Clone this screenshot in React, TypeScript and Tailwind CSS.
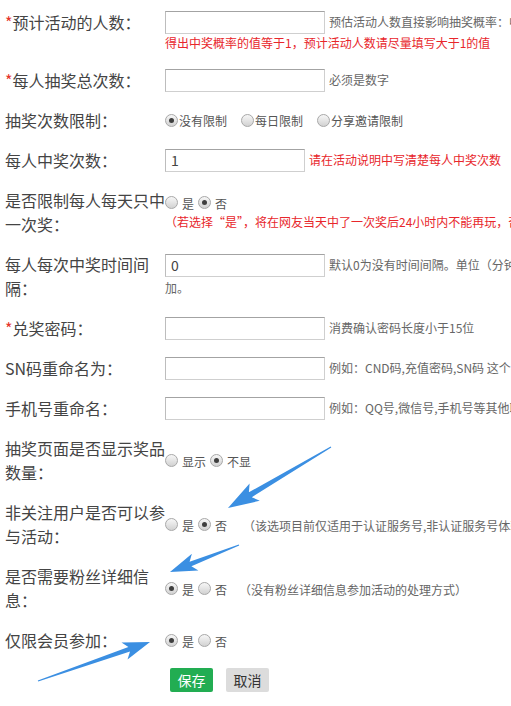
import type { ReactNode } from 'react';
import clsx from 'clsx';

function Row({ label, required, children, align = 'items-center' }: { label: string; required?: boolean; children: ReactNode; align?: string }) {
  return (
    <div className={clsx('flex', align)}>
      <div className="ml-[5px] w-[160px] shrink-0 text-[16px] leading-6 text-[#444]">
        {required && <span className="text-[#e5332a]">*</span>}
        {label}
      </div>
      <div className="min-w-0 flex-1">{children}</div>
    </div>
  );
}

function Radio({ checked }: { checked?: boolean }) {
  return (
    <span className="flex h-[13px] w-[13px] shrink-0 items-center justify-center rounded-full border border-[#a8a8a8] bg-linear-to-b from-[#f7f7f7] to-[#d2d2d2]">
      {checked && <span className="h-[5px] w-[5px] rounded-full bg-[#3f3f3f]" />}
    </span>
  );
}

function Input({ value, wide = true }: { value?: string; wide?: boolean }) {
  return (
    <input
      type="text"
      defaultValue={value}
      className={clsx(
        'h-[23px] shrink-0 border border-[#cfcfcf] border-t-[#a3a3a3] border-l-[#bdbdbd] bg-white px-[5px] text-[14px] text-[#444] outline-none',
        wide ? 'w-[160px]' : 'w-[140px]'
      )}
    />
  );
}

function Help({ children, red }: { children: ReactNode; red?: boolean }) {
  return (
    <span className={clsx('ml-[4px] whitespace-nowrap text-[12px]', red ? 'text-[#e8262b]' : 'text-[#666]')}>{children}</span>
  );
}

// 是 / 否 style radio pairs
function YesNo({ a, b, sel }: { a: string; b: string; sel: 0 | 1 }) {
  return (
    <div className="flex items-center gap-[4px] text-[12px] text-[#555]">
      <Radio checked={sel === 0} />
      <span className="translate-y-[2px]">{a}</span>
      <Radio checked={sel === 1} />
      <span className="translate-y-[2px]">{b}</span>
    </div>
  );
}

function arrowPoints(x1: number, y1: number, x2: number, y2: number, head = 24, hw = 9, sw = 2.6) {
  const dx = x2 - x1;
  const dy = y2 - y1;
  const len = Math.hypot(dx, dy);
  const ux = dx / len;
  const uy = dy / len;
  const nx = -uy;
  const ny = ux;
  const bx = x2 - ux * head;
  const by = y2 - uy * head;
  const pts = [
    [x1 + nx * 0.6, y1 + ny * 0.6],
    [bx + nx * sw, by + ny * sw],
    [bx - ux * 5 + nx * hw, by - uy * 5 + ny * hw],
    [x2, y2],
    [bx - ux * 5 - nx * hw, by - uy * 5 - ny * hw],
    [bx - nx * sw, by - ny * sw],
    [x1 - nx * 0.6, y1 - ny * 0.6],
  ];
  return pts.map((p) => p.map((v) => v.toFixed(1)).join(',')).join(' ');
}

export default function App() {
  return (
    <div className="relative min-h-screen w-full overflow-hidden bg-white font-['Noto_Sans_CJK_SC',sans-serif]">
      <div className="flex flex-col gap-4 pt-[10px] pb-4">
        {/* 预计活动的人数 */}
        <Row label="预计活动的人数：" required align="items-start">
          <div className="flex h-6 items-center">
            <Input />
            <Help>预估活动人数直接影响抽奖概率：中奖概率 = 奖品总数/(预估活动人数*每人抽奖次数)</Help>
          </div>
          <div className="whitespace-nowrap text-[12px] leading-[18px] text-[#e8262b]">
            得出中奖概率的值等于1，预计活动人数请尽量填写大于1的值
          </div>
        </Row>

        <Row label="每人抽奖总次数：" required>
          <div className="flex items-center">
            <Input />
            <Help>必须是数字</Help>
          </div>
        </Row>

        <Row label="抽奖次数限制：">
          <div className="flex items-center gap-[14px] text-[12px] text-[#555]">
            <label className="flex items-center gap-[1px]">
              <Radio checked />
              <span className="translate-y-[1px]">没有限制</span>
            </label>
            <label className="flex items-center gap-[1px]">
              <Radio />
              <span className="translate-y-[1px]">每日限制</span>
            </label>
            <label className="flex items-center gap-[1px]">
              <Radio />
              <span className="translate-y-[1px]">分享邀请限制</span>
            </label>
          </div>
        </Row>

        <Row label="每人中奖次数：">
          <div className="flex items-center">
            <Input value="1" wide={false} />
            <Help red>请在活动说明中写清楚每人中奖次数</Help>
          </div>
        </Row>

        <Row label="是否限制每人每天只中一次奖：">
          <div className="flex h-5 items-center">
            <YesNo a="是" b="否" sel={1} />
          </div>
          <div className="whitespace-nowrap text-[12px] leading-5 text-[#e8262b]">
            （若选择“是”，将在网友当天中了一次奖后24小时内不能再玩，否则可以继续参与）
          </div>
        </Row>

        <Row label="每人每次中奖时间间隔：">
          <div className="flex h-6 items-center">
            <Input value="0" />
            <Help>默认0为没有时间间隔。单位（分钟），设置后用户中奖需间隔该时间才能再次参</Help>
          </div>
          <div className="text-[12px] leading-[22px] text-[#666]">加。</div>
        </Row>

        <Row label="兑奖密码：" required>
          <div className="flex items-center">
            <Input />
            <Help>消费确认密码长度小于15位</Help>
          </div>
        </Row>

        <Row label="SN码重命名为：">
          <div className="flex items-center">
            <Input />
            <Help>例如：CND码,充值密码,SN码 这个字段会在中奖页面显示</Help>
          </div>
        </Row>

        <Row label="手机号重命名：">
          <div className="flex items-center">
            <Input />
            <Help>例如：QQ号,微信号,手机号等其他联系方式</Help>
          </div>
        </Row>

        <Row label="抽奖页面是否显示奖品数量：">
          <YesNo a="显示" b="不显" sel={1} />
        </Row>

        <Row label="非关注用户是否可以参与活动：">
          <div className="flex items-center">
            <YesNo a="是" b="否" sel={1} />
            <span className="ml-[16px] translate-y-[2px] whitespace-nowrap text-[12px] text-[#666]">
              （该选项目前仅适用于认证服务号,非认证服务号体验不到此功能）
            </span>
          </div>
        </Row>

        <Row label="是否需要粉丝详细信息：">
          <div className="flex items-center">
            <YesNo a="是" b="否" sel={0} />
            <span className="ml-[12px] translate-y-[2px] whitespace-nowrap text-[12px] text-[#666]">
              （没有粉丝详细信息参加活动的处理方式）
            </span>
          </div>
        </Row>

        <Row label="仅限会员参加：">
          <YesNo a="是" b="否" sel={0} />
        </Row>

        {/* buttons */}
        <div className="ml-[170px] flex gap-[13px]">
          <button className="h-[24px] w-[43px] rounded-[2px] bg-[#22ad52] text-[14px] text-white">保存</button>
          <button className="h-[24px] w-[43px] rounded-[2px] bg-[#dcdcdc] text-[14px] text-[#333]">取消</button>
        </div>
      </div>

      {/* annotation arrows */}
      <svg className="pointer-events-none absolute left-0 top-0" width="511" height="706" viewBox="0 0 511 706">
        <polygon points={arrowPoints(331, 447, 228, 508, 26, 10, 2.8)} fill="#3b8fe2" />
        <polygon points={arrowPoints(239, 545, 170, 572, 22, 9, 2.4)} fill="#3b8fe2" />
        <polygon points={arrowPoints(38, 681, 150, 642, 22, 9, 2.4)} fill="#3b8fe2" />
      </svg>
    </div>
  );
}
